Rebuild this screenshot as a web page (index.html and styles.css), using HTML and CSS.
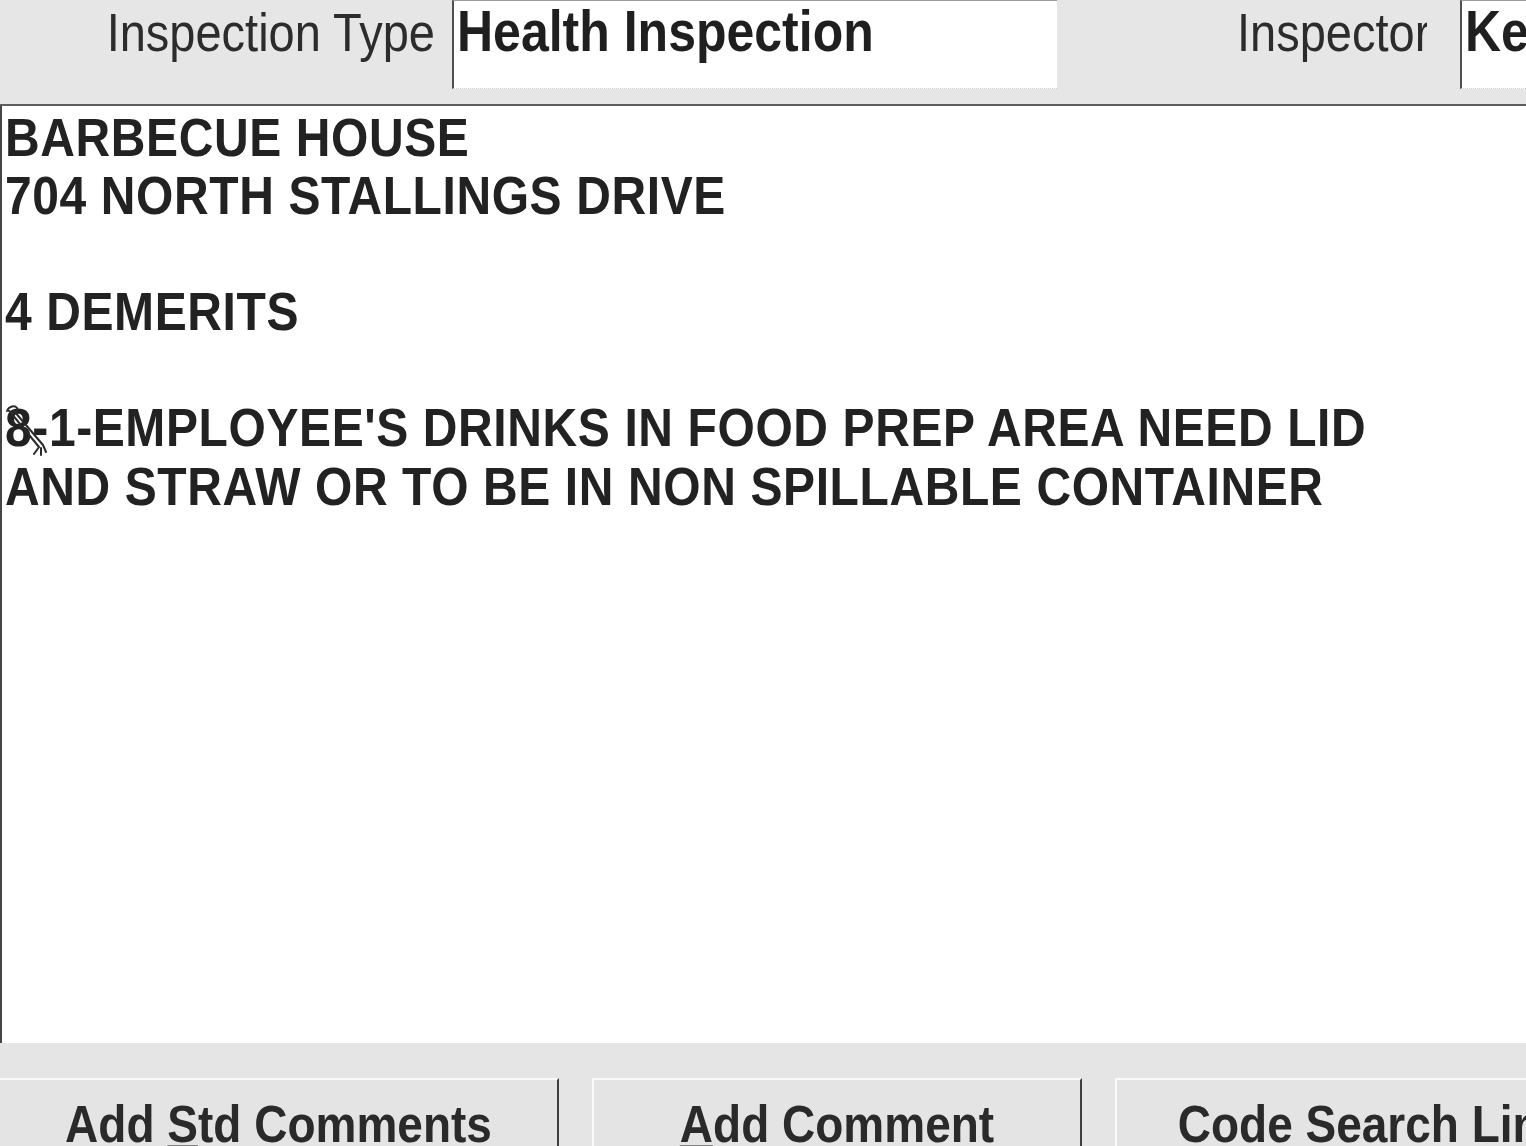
FILE: index.html
```html
<!DOCTYPE html>
<html lang="en">
<head>
  <meta charset="UTF-8">
  <title>Inspection Comments</title>
  <link rel="stylesheet" href="styles.css">
</head>
<body>
  <div class="top-bar">
    <div class="label label-type"><span class="tall">Inspection Type</span></div>
    <div class="field field-type"><span class="tall">Health Inspection</span></div>
    <div class="label label-inspector"><span class="tall">Inspector</span></div>
    <div class="field field-inspector"><span class="tall">Ke</span></div>
  </div>

  <div class="comments">
    <div class="comment-text">BARBECUE HOUSE
704 NORTH STALLINGS DRIVE

4 DEMERITS

8-1-EMPLOYEE'S DRINKS IN FOOD PREP AREA NEED LID
AND STRAW OR TO BE IN NON SPILLABLE CONTAINER</div>
    <!-- pen mark left on the scan -->
    <svg class="mark" width="50" height="52" viewBox="0 0 50 52">
      <path d="M4 6 C6 1 12 0 14 3 C16 6 10 9 6 6 M11 6 L40 40 M8 8 L36 42 M40 40 L43 47 M36 42 L31 49 M38 43 L38 50"
            fill="none" stroke="#2a2a2a" stroke-width="2" stroke-linecap="round"/>
    </svg>
  </div>

  <div class="button-bar">
    <button class="btn btn-std"><span class="tall">Add <u>S</u>td Comments</span></button>
    <button class="btn btn-add"><span class="tall"><u>A</u>dd Comment</span></button>
    <button class="btn btn-code"><span class="tall">Code Search Link</span></button>
  </div>
</body>
</html>
```

FILE: styles.css
```css
body {
  margin: 0;
  width: 1526px;
  height: 1146px;
  overflow: hidden;
  font-family: "Liberation Sans", Arial, sans-serif;
  color: #262626;
  background-color: #e5e5e5;
}

/* the scan is stretched a little in height */
.tall {
  display: inline-block;
  transform: scaleY(1.13);
  transform-origin: center bottom;
  white-space: nowrap;
}

.top-bar {
  display: flex;
  height: 104px;
  background-color: #e6e6e6;
  border-bottom: 2px solid #5c5c5c;
}
.label {
  font-size: 47px;
  line-height: 46px;
  padding-top: 13px;
  overflow: hidden;
  color: #2c2c2c;
}
.label-type {
  flex: 0 0 452px;
  box-sizing: border-box;
  text-align: right;
  padding-right: 17px;
}
.label-inspector {
  flex: 0 0 370px;
  box-sizing: border-box;
  padding-left: 180px;
  margin-right: 33px;
}
.field {
  height: 89px;
  box-sizing: border-box;
  background-color: #fff;
  border-top: 1px solid #9a9a9a;
  border-left: 2px solid #505050;
  border-bottom: 1px dotted #cfcfcf;
  font-size: 50px;
  font-weight: bold;
  line-height: 50px;
  padding: 9px 0 0 3px;
  color: #1f1f1f;
  overflow: hidden;
}
.field-type {
  flex: 0 0 605px;
}
.field-inspector {
  flex: 1;
}

.comments {
  position: relative;
  height: 937px;
  box-sizing: border-box;
  background-color: #fff;
  border-left: 2px solid #454545;
  padding: 3px 0 0 3px;
}
.comment-text {
  white-space: pre;
  font-size: 48px;
  font-weight: bold;
  letter-spacing: 0.6px;
  line-height: 51.3px;
  transform: scaleY(1.13);
  transform-origin: left top;
  color: #222;
}
.mark {
  position: absolute;
  left: 1px;
  top: 299px;
}

.button-bar {
  display: flex;
  gap: 33px;
  padding-top: 35px;
  background-color: #e5e5e5;
}
.btn {
  display: flex;
  align-items: flex-start;
  justify-content: center;
  height: 100px;
  padding: 24px 0 0 0;
  box-sizing: border-box;
  background-color: #e4e4e4;
  border: none;
  border-top: 2px solid #fafafa;
  border-left: 2px solid #fafafa;
  border-right: 2px solid #3e3e3e;
  font-family: "Liberation Sans", Arial, sans-serif;
  font-size: 46px;
  font-weight: bold;
  line-height: 46px;
  color: #2a2a2a;
  overflow: hidden;
}
.btn u {
  text-decoration-thickness: 3px;
  text-underline-offset: 3px;
}
.btn-std {
  flex: 0 0 559px;
  border-left: none;
}
.btn-add {
  flex: 0 0 490px;
}
.btn-code {
  flex: 0 0 514px;
}
```
